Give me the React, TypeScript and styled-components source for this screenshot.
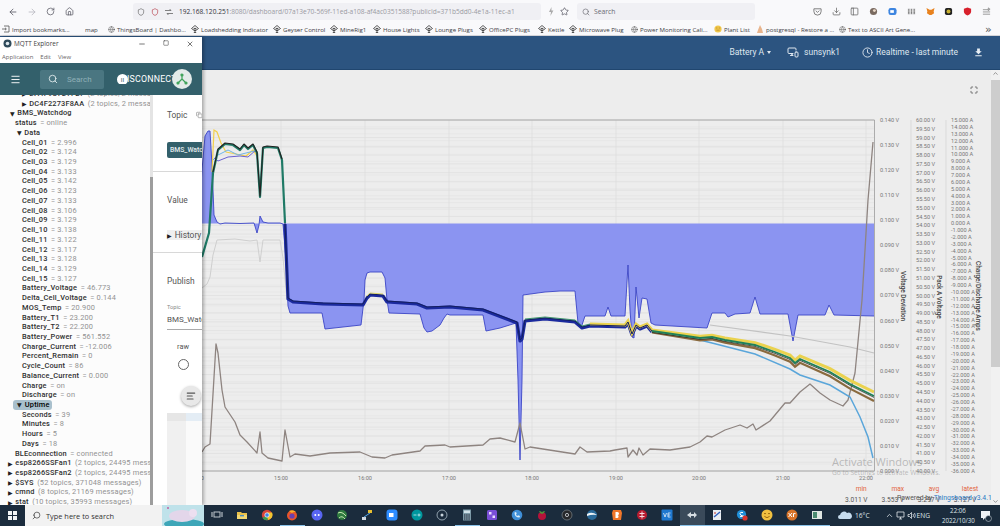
import * as React from "react";
import styled, { createGlobalStyle } from "styled-components";
import {
    AlignLeft,
    ArrowLeft,
    ArrowRight,
    ChevronDown,
    ChevronUp,
    Clock,
    Copy,
    Download,
    Globe,
    House,
    Maximize,
    Menu,
    Minus,
    MonitorSmartphone,
    PanelLeft,
    RotateCw,
    Search,
    Shield,
    Square,
    Star,
    X,
} from "lucide-react";

type Pt = [number, number];

const GlobalStyle = createGlobalStyle`
    html, body { margin: 0; padding: 0; background: #ededed; }
    * { box-sizing: border-box; }
`;

// chart data, read off the screenshot in page pixels
const blueLine: Pt[] = [
    [195, 223], [200, 200], [202, 170], [205, 136], [208, 131], [210, 131], [212, 165], [214, 215],
    [217, 222], [220, 224], [225, 223], [240, 223.5], [254, 223], [257, 233], [259, 225], [260, 216],
    [263, 222], [268, 223], [280, 223], [283, 224], [286, 260], [288, 306], [290, 313], [322, 313],
    [325, 329], [361, 325], [364, 300], [365, 280], [367, 273], [370, 272], [382, 272], [385, 278],
    [387, 300], [389, 313], [420, 314], [424, 328], [427, 332], [432, 331], [440, 325], [444, 318],
    [447, 314], [450, 315], [483, 315], [486, 331], [500, 328], [516, 323], [518, 380], [520, 460],
    [522, 380], [523, 295], [545, 292], [560, 291], [575, 291], [578, 323], [581, 328], [585, 316],
    [605, 316], [608, 307], [611, 316], [625, 316], [628, 265], [630, 310], [632, 337], [634, 338],
    [636, 287], [639, 318], [642, 298], [647, 299], [651, 323], [655, 325], [707, 328], [712, 313],
    [725, 313], [728, 317], [735, 314], [750, 313], [755, 297], [760, 314], [788, 314], [793, 341],
    [798, 315], [825, 315], [829, 305], [834, 315], [874, 316],
];

const bandLine: Pt[] = [
    [202, 257], [209, 233], [213, 173], [218, 150], [225, 144], [233, 145], [240, 150], [244, 145],
    [248, 149], [253, 145], [257, 153], [260, 197], [263, 148], [267, 147], [278, 148], [282, 160],
    [285, 223], [288, 298], [293, 301], [323, 303], [363, 304], [367, 297], [370, 294], [383, 295],
    [387, 301], [417, 303], [427, 307], [450, 306], [483, 309], [517, 322], [520, 340], [522, 338],
    [525, 320], [545, 318], [575, 321], [582, 327], [590, 325], [625, 326], [628, 322], [632, 334],
    [636, 325], [640, 328], [647, 325], [652, 331], [700, 338], [712, 337], [725, 340], [755, 345],
    [775, 352], [790, 358], [795, 363], [800, 359], [830, 372], [850, 384], [874, 396],
];

const lowCell: Pt[] = [
    [690, 337], [700, 340], [712, 343], [755, 354], [790, 369], [800, 375], [830, 385], [850, 397],
    [860, 417], [868, 437], [873, 458],
];

const greyLine: Pt[] = [
    [202, 288], [207, 284], [210, 277], [213, 255], [217, 240], [235, 239], [250, 241], [257, 240],
    [260, 262], [263, 240], [280, 240], [283, 258], [287, 300],
];
const greyTail: Pt[] = [[710, 325], [790, 336], [850, 347], [874, 353]];

const deviation: Pt[] = [
    [202, 452], [205, 447], [210, 444], [216, 344], [218, 353], [222, 390], [225, 407], [235, 422],
    [240, 435], [247, 442], [257, 453], [260, 432], [262, 453], [268, 458], [282, 461], [285, 430],
    [290, 457], [295, 454], [310, 456], [330, 453], [360, 452], [372, 457], [385, 458], [392, 455],
    [420, 451], [425, 446], [445, 445], [450, 447], [483, 445], [490, 439], [500, 438], [515, 442],
    [520, 423], [525, 449], [530, 447], [575, 454], [580, 447], [587, 452], [610, 451], [615, 450],
    [627, 448], [628, 457], [633, 450], [637, 455], [639, 448], [643, 455], [650, 449], [670, 450],
    [690, 447], [700, 442], [707, 436], [712, 437], [725, 430], [740, 425], [747, 428], [753, 424],
    [756, 430], [770, 421], [785, 403], [790, 403], [800, 392], [810, 384], [820, 393], [830, 400],
    [843, 406], [848, 400], [855, 373], [862, 300], [868, 200], [873, 142],
];

const yellowSpike: Pt[] = [[212, 172], [214, 130], [217, 132], [221, 143], [226, 152], [236, 154], [246, 156], [253, 150], [257, 156]];
const skyWobble: Pt[] = [[213, 160], [218, 155], [228, 150], [238, 155], [246, 153], [254, 151]];
const purpleWobble: Pt[] = [[214, 158], [218, 161], [228, 157], [240, 156], [248, 157], [256, 150]];

const toPath = (pts: Pt[]) => pts.map(([x, y], i) => `${i ? "L" : "M"}${x} ${y}`).join("");
const range = (pts: Pt[], from: number, to: number) => pts.filter(([x]) => x >= from && x <= to);
const shifted = (pts: Pt[], dy: (x: number) => number): Pt[] => pts.map(([x, y]) => [x, y + dy(x)]);
const spread = (x: number) => Math.max(0, (x - 650) / 224);

const hours: [number, string][] = [
    [197, "14:00"], [281, "15:00"], [365, "16:00"], [449, "17:00"], [532, "18:00"], [616, "19:00"],
    [699, "20:00"], [783, "21:00"], [866, "22:00"],
];
const deviationTicks = Array.from({ length: 15 }, (_, i) => `${(0.14 - i * 0.01).toFixed(3)} V`);
const voltTicks = Array.from({ length: 41 }, (_, i) => `${(60 - i * 0.5).toFixed(2)} V`);
const ampTicks = Array.from({ length: 52 }, (_, i) => `${(15 - i).toFixed(3)} A`);

const Page = styled.div`
    position: relative;
    width: 1000px;
    height: 526px;
    overflow: hidden;
    display: flex;
    flex-direction: column;
    background: #ededed;
    font-family: Roboto, "Liberation Sans", sans-serif;
`;

const BrowserBar = styled.div`
    height: 23px;
    background: #f9f9fb;
    display: flex;
    align-items: center;
    color: #5b5b66;
`;

const NavButton = styled.div<{ $faded?: boolean }>`
    width: 19px;
    display: flex;
    justify-content: center;
    color: ${(p) => (p.$faded ? "#b9b9c0" : "#5b5b66")};
`;

const NavButtons = styled.div`
    display: flex;
    padding-left: 3px;
    width: 133px;
`;

const UrlBox = styled.div`
    width: 408px;
    height: 17px;
    background: #f0f0f4;
    border-radius: 3px;
    display: flex;
    align-items: center;
    padding-left: 4px;
    gap: 6px;
    overflow: hidden;
    flex-shrink: 0;
`;

const UrlText = styled.div`
    font: 6.6px "Open Sans", sans-serif;
    color: #9a9aa2;
    white-space: nowrap;
    width: 353px;
    overflow: hidden;
    b {
        font-weight: 400;
        color: #33333a;
    }
`;

const BarSearch = styled.div`
    margin-left: 8px;
    width: 178px;
    height: 17px;
    background: #f0f0f4;
    border-radius: 3px;
    display: flex;
    align-items: center;
    gap: 4px;
    padding-left: 5px;
    font: 6.8px "Open Sans", sans-serif;
    color: #6b6b73;
`;

const ExtensionTray = styled.div`
    margin-left: 53px;
    display: flex;
    align-items: center;
`;

const ExtensionSlot = styled.div`
    width: 18.8px;
    display: flex;
    justify-content: center;
`;

const BookmarksBar = styled.div`
    height: 13px;
    background: #f9f9fb;
    border-bottom: 1px solid #d4d4d8;
    display: flex;
    align-items: center;
    position: relative;
    padding-left: 2px;
`;

const Bookmark = styled.div<{ $w: number }>`
    width: ${(p) => p.$w}px;
    flex-shrink: 0;
    display: flex;
    align-items: center;
    gap: 2px;
    font: 6.1px "Open Sans", sans-serif;
    color: #3c3c44;
    white-space: nowrap;
    overflow: hidden;
`;

const MoreBookmarks = styled.div`
    font: 11px/11px "DejaVu Sans", sans-serif;
    color: #555;
    margin-left: 3px;
`;

const DashHeader = styled.div`
    height: 34px;
    background: #2c5480;
    border-bottom: 1px solid #20466f;
    display: flex;
    justify-content: flex-end;
    align-items: center;
    color: #dfe7ef;
    font-size: 8.5px;
    padding-right: 16px;
    padding-bottom: 1px;
`;

const HeaderItem = styled.div<{ $gap?: number; $right: number }>`
    display: flex;
    align-items: center;
    gap: ${(p) => p.$gap ?? 3}px;
    margin-right: ${(p) => p.$right}px;
    white-space: nowrap;
`;

const Caret = styled.span`
    width: 0;
    height: 0;
    border-left: 2.5px solid transparent;
    border-right: 2.5px solid transparent;
    border-top: 3px solid #dfe7ef;
`;

const Body = styled.div`
    flex: 1;
    display: flex;
    min-height: 0;
`;

const Dashboard = styled.div`
    flex: 1;
    display: flex;
    flex-direction: column;
    position: relative;
    min-width: 0;
`;

const FullscreenRow = styled.div`
    height: 40px;
    display: flex;
    justify-content: flex-end;
    padding: 16px 13px 0 0;
    color: #444;
`;

const ChartSvg = styled.svg`
    display: block;
    flex-shrink: 0;
    font-family: Roboto, sans-serif;
`;

const Legend = styled.div`
    position: relative;
    flex: 1;
    padding: 2px 0 0 843px;
    font-size: 6.6px;
    line-height: 10.5px;
`;

const LegendRow = styled.div<{ $shift?: number }>`
    display: grid;
    grid-template-columns: 36.5px 36.5px 36px 36px;
    text-align: center;
    margin-left: ${(p) => p.$shift ?? 0}px;
`;

const LegendHead = styled.span`
    color: #e2623b;
`;

const LegendValue = styled.span`
    color: #555;
    white-space: nowrap;
`;

const Powered = styled.div`
    position: absolute;
    left: 897px;
    top: 11px;
    font-size: 6.8px;
    line-height: 10px;
    color: #555;
    white-space: nowrap;
    span {
        color: #2a7ac4;
    }
`;

const ScrollTrack = styled.div`
    width: 9px;
    background: #f1f1f1;
    display: flex;
    flex-direction: column;
    align-items: center;
    justify-content: space-between;
    position: relative;
`;

const ScrollThumb = styled.div`
    position: absolute;
    top: 10px;
    left: 0;
    width: 100%;
    height: 287px;
    background: #cdcdcd;
`;

const Watermark = styled.div`
    position: absolute;
    left: 832px;
    top: 385px;
    pointer-events: none;
    color: rgba(140, 140, 140, 0.55);
    font-family: "Open Sans", sans-serif;
    white-space: nowrap;
`;

const WatermarkTitle = styled.div`
    font-size: 11px;
    line-height: 14px;
`;

const WatermarkHint = styled.div`
    font-size: 6.6px;
    line-height: 8px;
`;

const Taskbar = styled.div`
    height: 21px;
    background: #1b2c3d;
    display: flex;
    align-items: stretch;
    position: relative;
    z-index: 3;
    color: #dfe5ea;
`;

const StartButton = styled.div`
    width: 25px;
    display: flex;
    align-items: center;
    justify-content: center;
`;

const TaskSearch = styled.div`
    width: 179px;
    background: #f2f2f2;
    display: flex;
    align-items: center;
    gap: 5px;
    padding-left: 7px;
    font: 7.4px "Open Sans", sans-serif;
    color: #333;
    position: relative;
    overflow: hidden;
`;

const SearchArt = styled.svg`
    position: absolute;
    right: 0;
    top: 0;
`;

const TaskApps = styled.div`
    display: flex;
    padding-left: 0.5px;
`;

const TaskSlot = styled.div<{ $active?: boolean; $open?: boolean }>`
    width: 25px;
    display: flex;
    align-items: center;
    justify-content: center;
    background: ${(p) => (p.$active ? "#3a4a5a" : "transparent")};
    border-bottom: 1px solid ${(p) => (p.$open || p.$active ? "#8cc4ea" : "transparent")};
`;

const Tray = styled.div`
    margin-left: auto;
    display: flex;
    align-items: center;
    font: 6.6px "Open Sans", sans-serif;
    padding-right: 8px;
`;

const TrayItem = styled.div<{ $left?: number }>`
    margin-left: ${(p) => p.$left ?? 0}px;
    display: flex;
    align-items: center;
    white-space: nowrap;
`;

const TrayClock = styled.div`
    margin-left: 12px;
    text-align: center;
    line-height: 9.5px;
    font-size: 6.2px;
    width: 32px;
`;

const MqttWindow = styled.div`
    position: absolute;
    left: 0;
    top: 37px;
    width: 202px;
    height: 468px;
    background: #fff;
    box-shadow: 2px 0 3px rgba(0, 0, 0, 0.28);
    display: flex;
    flex-direction: column;
    z-index: 2;
`;

const TitleBar = styled.div`
    height: 13px;
    padding-left: 3px;
    display: flex;
    align-items: center;
    gap: 2px;
    font: 6.4px "Open Sans", sans-serif;
    color: #444;
    flex-shrink: 0;
`;

const WindowControls = styled.div`
    margin-left: auto;
    display: flex;
    color: #333;
`;

const WindowControl = styled.div`
    width: 24px;
    display: flex;
    justify-content: center;
`;

const MenuBar = styled.div`
    height: 13px;
    padding-left: 2px;
    display: flex;
    align-items: center;
    gap: 7px;
    font: 6px "Open Sans", sans-serif;
    color: #666;
    flex-shrink: 0;
`;

const TealBar = styled.div`
    height: 32px;
    background: #33606b;
    display: flex;
    align-items: center;
    padding-left: 10px;
    color: #fff;
    flex-shrink: 0;
    position: relative;
    z-index: 1;
`;

const SearchField = styled.div`
    margin-left: 19px;
    width: 64px;
    height: 19px;
    background: #4a7681;
    border-radius: 2px;
    display: flex;
    align-items: center;
    gap: 9px;
    padding-left: 8px;
    font-size: 8px;
    color: #8fb0b8;
`;

const Disconnect = styled.div`
    margin-left: 13px;
    font-size: 8.8px;
    font-weight: 400;
    letter-spacing: 0.2px;
    position: relative;
    width: 60px;
    padding-left: 10px;
    white-space: nowrap;
    overflow: hidden;
`;

const DisconnectDot = styled.span`
    position: absolute;
    left: 0;
    top: 0;
    width: 11px;
    height: 11px;
    border-radius: 50%;
    background: #fff;
    color: #33606b;
    font-size: 6px;
    line-height: 11px;
    text-align: center;
`;

const Avatar = styled.div`
    position: absolute;
    left: 172px;
    top: 6px;
    width: 20px;
    height: 20px;
    border-radius: 50%;
    background: #e3ebe9;
    display: flex;
    align-items: center;
    justify-content: center;
`;

const Panes = styled.div`
    flex: 1;
    display: flex;
    min-height: 0;
`;

const TreePane = styled.div`
    width: 150px;
    background: #fcfcfc;
    overflow: hidden;
    flex-shrink: 0;
`;

const TreeList = styled.div`
    margin-top: -6px;
`;

const TreeRow = styled.div<{ $indent: number }>`
    height: 9.72px;
    line-height: 9.72px;
    padding-left: ${(p) => p.$indent}px;
    font-size: 7.4px;
    letter-spacing: 0.18px;
    white-space: nowrap;
    display: flex;
    align-items: center;
    gap: 2.5px;
`;

const Glyph = styled.span`
    font: 6px "DejaVu Sans", sans-serif;
    color: #222;
`;

const Key = styled.span`
    font-weight: 500;
    color: #2f2f2f;
`;

const Val = styled.span`
    color: #929292;
    font-weight: 400;
    margin-left: 1px;
`;

const Highlight = styled.span`
    display: inline-flex;
    align-items: center;
    gap: 3px;
    background: #a9c0cd;
    border-radius: 3px;
    padding: 0 2px 0 4px;
    margin-left: -3px;
    font-weight: 500;
`;

const SplitBar = styled.div`
    width: 3px;
    flex-shrink: 0;
    background: linear-gradient(#e4e4e4 0, #e4e4e4 82px, #9d9d9d 82px);
`;

const DetailPane = styled.div`
    flex: 1;
    min-width: 0;
    overflow: hidden;
    display: flex;
    flex-direction: column;
    background: #fff;
    color: #555;
    font-size: 8.4px;
`;

const DetailSection = styled.div<{ $h: number; $last?: boolean }>`
    height: ${(p) => p.$h}px;
    flex-shrink: 0;
    padding-left: 14px;
    border-bottom: ${(p) => (p.$last ? "none" : "1px solid #d8d8d8")};
    white-space: nowrap;
    overflow: hidden;
`;

const DetailLabel = styled.div<{ $top: number }>`
    padding-top: ${(p) => p.$top}px;
    display: flex;
    align-items: center;
    gap: 8px;
    line-height: 10px;
`;

const TopicChip = styled.div`
    margin-top: 22px;
    height: 16px;
    width: 50px;
    border-radius: 2px;
    background: #33606b;
    color: #e4ecee;
    font-size: 6.8px;
    font-weight: 500;
    line-height: 16px;
    padding-left: 3px;
`;

const HistoryRow = styled.div`
    margin-top: 25px;
    height: 10px;
    background: #f0f0f0;
    line-height: 10px;
    display: flex;
    align-items: center;
    gap: 3px;
`;

const SmallLabel = styled.div`
    margin-top: 18px;
    font-size: 5.6px;
    color: #888;
    line-height: 7px;
`;

const TopicInput = styled.div`
    margin-top: 4px;
    height: 15px;
    width: 40px;
    border-bottom: 1px solid #aaa;
    font-size: 8px;
    line-height: 10px;
`;

const RawOption = styled.div`
    width: 32px;
    padding-top: 12px;
    font-size: 7.4px;
    text-align: center;
    line-height: 9px;
    display: flex;
    flex-direction: column;
    align-items: center;
    gap: 8px;
`;

const RadioDot = styled.div`
    width: 11px;
    height: 11px;
    border-radius: 50%;
    border: 1px solid #666;
`;

const FabRow = styled.div`
    position: relative;
    height: 42px;
    flex-shrink: 0;
`;

const Fab = styled.div`
    position: absolute;
    left: 28px;
    top: 15px;
    width: 20px;
    height: 20px;
    border-radius: 50%;
    background: #e8e8e8;
    box-shadow: 0 1px 3px rgba(0, 0, 0, 0.35);
    display: flex;
    align-items: center;
    justify-content: center;
    color: #555;
`;

const EditorBlock = styled.div`
    flex: 1;
    margin-left: 14px;
    display: flex;
`;

const EditorGutter = styled.div`
    width: 19px;
    background: #f0f0f0;
    border-top: 8px solid #e6e6e6;
`;

const EditorLine = styled.div`
    flex: 1;
    background: #fafafa;
    border-top: 8px solid #e4edf5;
`;

const Tree: [number, string, string?][] = [
    [22, "DA4F9C7D7F27", "(2 topics, 2 messages)"],
    [22, "DC4F2273F8AA", "(2 topics, 2 messages)"],
];

const cells = [
    "2.996", "3.124", "3.129", "3.133", "3.142", "3.123", "3.133", "3.106", "3.129", "3.138", "3.122", "3.117", "3.128",
    "3.129", "3.127",
];

const dataRows: [string, string][] = [
    ...cells.map((v, i): [string, string] => [`Cell_${String(i + 1).padStart(2, "0")}`, v]),
    ["Battery_Voltage", "46.773"],
    ["Delta_Cell_Voltage", "0.144"],
    ["MOS_Temp", "20.900"],
    ["Battery_T1", "23.200"],
    ["Battery_T2", "22.200"],
    ["Battery_Power", "561.552"],
    ["Charge_Current", "-12.006"],
    ["Percent_Remain", "0"],
    ["Cycle_Count", "86"],
    ["Balance_Current", "0.000"],
    ["Charge", "on"],
    ["Discharge", "on"],
];

const uptimeRows: [string, string][] = [
    ["Seconds", "39"],
    ["Minutes", "8"],
    ["Hours", "5"],
    ["Days", "18"],
];

const rootRows: [string, string][] = [
    ["esp8266SSFan1", "(2 topics, 24495 messages)"],
    ["esp8266SSFan2", "(2 topics, 24495 messages)"],
    ["$SYS", "(52 topics, 371048 messages)"],
    ["cmnd", "(8 topics, 21169 messages)"],
    ["stat", "(10 topics, 35993 messages)"],
];

const bookmarks: [number, string, string][] = [
    [83, "import", "Import bookmarks..."],
    [23, "none", "map"],
    [83, "globe", "ThingsBoard | Dashbo..."],
    [82, "tb", "Loadshedding Indicator"],
    [57, "tb", "Geyser Control"],
    [43, "tb", "MineRig1"],
    [52, "tb", "House Lights"],
    [54, "tb", "Lounge Plugs"],
    [59, "tb", "OfficePC Plugs"],
    [31, "tb", "Kettle"],
    [62, "tb", "Microwave Plug"],
    [83, "globe", "Power Monitoring Cali..."],
    [42, "smile", "Plant List"],
    [83, "pg", "postgresql - Restore a ..."],
    [143, "globe", "Text to ASCII Art Gene..."],
];

const BookmarkIcon: React.FC<{ kind: string }> = ({ kind }) => {
    if (kind === "none") return null;
    if (kind === "globe") return <Globe size={7} color="#555" strokeWidth={1.6} />;
    if (kind === "import")
        return (
            <svg width="8" height="8" viewBox="0 0 8 8" fill="none" stroke="#555" strokeWidth=".8">
                <path d="M2 1h5v6H2M0 4h4M3 2.8 4.4 4 3 5.2" />
            </svg>
        );
    if (kind === "smile")
        return (
            <svg width="8" height="8" viewBox="0 0 8 8">
                <circle cx="4" cy="4" r="3.6" fill="#f0c64a" />
                <path d="M2 3h1.4M4.8 3h1.4M2.4 5.2h3.2" stroke="#a87a20" strokeWidth=".6" />
            </svg>
        );
    if (kind === "pg")
        return (
            <svg width="8" height="8" viewBox="0 0 8 8">
                <path d="M4 0 6 4l1 4H1l1-3z" fill="#e8b48c" />
            </svg>
        );
    return (
        <svg width="8" height="8" viewBox="0 0 8 8" fill="none" stroke="#333" strokeWidth=".8">
            <path d="M4 .5 7.5 3.5 6 4.6 4 3 2 4.6.5 3.5zM4 3v4.5M2.5 5.5h3M2.8 7.5h2.4" />
        </svg>
    );
};

const ext = (body: React.ReactNode) => (
    <svg width="9" height="9" viewBox="0 0 10 10">
        {body}
    </svg>
);

const extensions = [
    ext(<path d="M1 2h8v3a4 4 0 0 1-8 0zM3 4l2 2 2-2" fill="none" stroke="#666" strokeWidth=".9" />),
    <Download key="d" size={9} color="#666" />,
    <PanelLeft key="p" size={9} color="#666" />,
    ext(<><circle cx="5" cy="5" r="4" fill="#7a6a60" /><circle cx="6" cy="4" r="1.6" fill="#e8d8c8" /></>),
    ext(<><rect x=".5" y="1" width="9" height="8" rx="2.5" fill="#3d85e0" /><rect x="2.5" y="3.5" width="4" height="3" fill="#fff" /></>),
    ext(<path d="M1 2h2v6H1zM4 2h2v6H4zM7 2h2v6H7zM1 4.5h8" fill="#777" stroke="#f9f9fb" strokeWidth=".4" />),
    ext(<path d="M.5 1 4 3h2l3.5-2-1 4 .5 2-3 2H4L1 7l.5-2z" fill="#e8821e" />),
    ext(<><rect x="1" y="1" width="8" height="8" rx="2" fill="#222" /><circle cx="5" cy="5" r="2.2" fill="#c8b030" /></>),
    ext(<path d="M1 2 5 .5 9 2v3q0 3-4 4.5Q1 8 1 5z" fill="#d8202c" />),
    ext(<path d="M1 3h6M1 5.5h8M1 8h8M7 1v3l2-1.5z" stroke="#777" strokeWidth=".8" fill="none" />),
];

const icon = (body: React.ReactNode) => (
    <svg width="12" height="12" viewBox="0 0 12 12">
        {body}
    </svg>
);

const taskApps: { node: React.ReactNode; open?: boolean; active?: boolean }[] = [
    { node: icon(<><rect x="3" y="3" width="6" height="5" fill="none" stroke="#cfd6dc" strokeWidth=".9" /><path d="M1 3v5M11 3v5" stroke="#cfd6dc" /></>) },
    { node: icon(<><path d="M1 3h4l1 1h5v6H1z" fill="#e8c04a" /><path d="M1 6h10v4H1z" fill="#f4d870" /><path d="M4 6h4v1.4H4z" fill="#4a90c8" /></>) },
    { node: icon(<><circle cx="6" cy="6" r="5.2" fill="#d8443a" /><path d="M6 6 1.5 9A5.2 5.2 0 0 0 7 11z" fill="#3c9a50" /><path d="M6 6 7 11a5.2 5.2 0 0 0 4-7.5H6z" fill="#f2c530" /><circle cx="6" cy="6" r="2.2" fill="#3f84e8" stroke="#fff" strokeWidth=".7" /></>) },
    { node: icon(<><circle cx="6" cy="6.5" r="5" fill="#e8552a" /><circle cx="6" cy="7" r="2.6" fill="#6a3fb0" /><path d="M3 2Q7 0 10 3 7 2.5 6 4 4 3 3 2z" fill="#f8b030" /></>), open: true },
    { node: icon(<><circle cx="6" cy="6" r="5.5" fill="#5865f2" /><circle cx="4.3" cy="6" r="1" fill="#fff" /><circle cx="7.7" cy="6" r="1" fill="#fff" /></>) },
    { node: icon(<><circle cx="6" cy="6" r="5" fill="#2f7a40" /><path d="M2 4q4-2 8 3M3 9q3-3 6 1" stroke="#c8e8b0" fill="none" /></>) },
    { node: icon(<><rect x="1" y="8" width="4" height="3" fill="#d0d8e0" /><rect x="7" y="1" width="4" height="3" fill="#e8c030" /><path d="M3 8 9 4" stroke="#58a8e8" /></>) },
    { node: icon(<><rect x=".5" y=".5" width="11" height="11" rx="3" fill="#2d8cff" /><rect x="3" y="4" width="4.5" height="4" fill="#fff" /></>) },
    { node: icon(<><circle cx="6" cy="6" r="5.5" fill="#00979d" /><path d="M2.5 6h3M6.5 6h3M8 4.5v3" stroke="#cdeff0" strokeWidth=".8" /></>) },
    { node: icon(<><circle cx="6" cy="6" r="5" fill="none" stroke="#8fa0ac" /><circle cx="6" cy="6" r="1.5" fill="#c8d4dc" /></>) },
    { node: icon(<><rect x="2" y=".5" width="8" height="11" fill="#7d9aa8" /><rect x="3" y="1.5" width="6" height="2.5" fill="#d0e0e8" /><path d="M3 6h6M3 8h6M3 10h6" stroke="#223" strokeDasharray="1.4 .8" /></>), open: true },
    { node: icon(<><rect x="1" y="1" width="10" height="10" rx="1.5" fill="#7a4fd8" /><path d="M3 3h2.5v2.5H3zM6.5 6.5H9V9H6.5z" fill="#eadcff" /></>) },
    { node: icon(<><circle cx="6" cy="6" r="5.3" fill="#3f8fd8" /><path d="M3.5 3.5q0 5 5 5l.5-1.6-2-.6-.6.8q-1-.5-1.5-1.7l.8-.5-.6-2z" fill="#dff0fb" /></>) },
    { node: icon(<><circle cx="6" cy="7" r="4" fill="#b5133a" /><path d="M3 2q3 0 3 2 0-2 3-2-1 3-3 3T3 2z" fill="#4a9a3a" /></>) },
    { node: icon(<><circle cx="6" cy="6" r="5" fill="#26282b" stroke="#7d8488" strokeWidth=".7" /><circle cx="6" cy="6" r="1.6" fill="none" stroke="#d8dcdf" strokeWidth=".8" /></>) },
    { node: icon(<><circle cx="6" cy="6" r="5" fill="#2a6a9a" /><path d="M1 5q5-3 10 1-5-1-10 1z" fill="#eef3f6" /></>) },
    { node: icon(<><path d="M2 1h8l1 3-1 7H2L1 4z" fill="#f0762a" /><path d="M4.5 3v6h2a1.6 1.6 0 0 0 0-3 1.4 1.4 0 0 0 0-3z" fill="#fff" /></>) },
    { node: icon(<><circle cx="6" cy="6" r="5" fill="#b81c30" /><path d="M6 2.5v7M3.5 4.5h5M3.5 7.5h5" stroke="#f6d8dc" /></>) },
    { node: icon(<><rect x=".5" y=".5" width="11" height="11" rx="1" fill="#1f78d0" /><path d="M2.5 4 4 8l1.5-4M9.5 4H7v4h2.5M7 6h2" stroke="#fff" strokeWidth=".7" fill="none" /></>) },
    { node: icon(<path d="M1 6 5 3v2h3V3l3 3-3 3V7H5v2z" fill="#d6dde2" />), active: true },
    { node: icon(<><rect x="2" y="1" width="8" height="10" fill="#e8edf2" /><path d="M3 8 9 3" stroke="#3060c0" strokeWidth="1.4" /><path d="M3 4h2" stroke="#c03030" /></>), open: true },
    { node: icon(<><circle cx="5.5" cy="5.5" r="4.6" fill="#1f8fd8" /><path d="M7 3.6Q4 2.6 4 4.6t3 2.4-3 .6" stroke="#fff" fill="none" /><circle cx="9" cy="9" r="2.6" fill="#d8342c" /></>), open: true },
    { node: icon(<><circle cx="6" cy="6" r="5.5" fill="#f0c040" /><path d="M3 4.6h2M7 4.6h2M3.4 7.4Q6 10 8.6 7.4" stroke="#9a6a10" fill="none" /></>), open: true },
    { node: icon(<><circle cx="6" cy="6" r="5.5" fill="#d8742a" /><path d="M2.5 4 6 8M6 4 2.5 8M7.5 8V4.6h2" stroke="#fff" fill="none" /></>), open: true },
    { node: icon(<><rect x="1" y="2" width="10" height="8" fill="#dfe6e2" /><rect x="2" y="3" width="4" height="6" fill="#4a8a70" /></>), open: true },
];

const Arrow: React.FC<{ open?: boolean }> = ({ open }) => <Glyph>{open ? "▼" : "▶"}</Glyph>;

const ChartPlot: React.FC = () => {
    const band = range(bandLine, 283, 874);
    const early = range(bandLine, 202, 286);
    return (
        <ChartSvg width="991" height="372" viewBox="0 110 991 372">
            {voltTicks.map((_, i) => (
                <line key={`v${i}`} x1="150" x2="874" y1={120 + i * 8.775} y2={120 + i * 8.775} stroke="#dcdcdc" strokeWidth=".6" />
            ))}
            {ampTicks.map((_, i) => (
                <line key={`a${i}`} x1="150" x2="874" y1={120 + i * 6.88} y2={120 + i * 6.88} stroke="#e2e2e2" strokeWidth=".5" />
            ))}
            {hours.map(([x]) => (
                <line key={x} x1={x} x2={x} y1="120" y2="471" stroke="#dddddd" strokeWidth=".7" />
            ))}

            <path d={`${toPath(blueLine)}L874 223.5L195 223.5Z`} fill="#8b94f1" />
            <path d={toPath(blueLine)} fill="none" stroke="#3b45c6" strokeWidth=".9" strokeLinejoin="round" />

            <path d={toPath(greyLine)} fill="none" stroke="#cfcfcf" strokeWidth="1" />
            <path d={toPath(greyTail)} fill="none" stroke="#c2c2c2" strokeWidth="1.2" />
            <path d={toPath(deviation)} fill="none" stroke="#8e8480" strokeWidth="1.3" strokeLinejoin="round" />

            <path d={toPath(yellowSpike)} fill="none" stroke="#f2cf4c" strokeWidth="1.2" />
            <path d={toPath(skyWobble)} fill="none" stroke="#6fb6e6" strokeWidth="1" />
            <path d={toPath(purpleWobble)} fill="none" stroke="#6a60d0" strokeWidth="1" />
            <path d={toPath(early)} fill="none" stroke="#1f7a66" strokeWidth="2.2" strokeLinejoin="round" />
            <path d={toPath(shifted(range(early, 213, 283), () => -1))} fill="none" stroke="#222" strokeWidth="1.1" strokeLinejoin="round" />

            <path d={toPath(lowCell)} fill="none" stroke="#5aa6da" strokeWidth="1.5" />

            <path d={toPath(shifted(range(band, 283, 660), () => 1))} fill="none" stroke="#1b2a9e" strokeWidth="3.2" strokeLinejoin="round" />
            <path d={toPath(shifted(range(band, 650, 874), (x) => 1.5 + spread(x) * 3.5))} fill="none" stroke="#8a6a3e" strokeWidth="2.2" />
            <path d={toPath(shifted(range(band, 583, 874), (x) => -1 - spread(x) * 3))} fill="none" stroke="#ead24e" strokeWidth={3} />
            <path d={toPath(range(band, 283, 660))} fill="none" stroke="#15205f" strokeWidth="1" strokeLinejoin="round" />
            <path d={toPath(shifted(range(band, 650, 874), () => 1.4))} fill="none" stroke="#2a2a26" strokeWidth=".8" />
            <path d={toPath(shifted(range(band, 650, 874), () => 0))} fill="none" stroke="#1f8058" strokeWidth="1.8" />
            <path d={toPath(shifted(range(band, 525, 600), () => -1))} fill="none" stroke="#2b8a5c" strokeWidth=".9" />
            <path d={toPath(shifted(range(band, 367, 385), () => -1))} fill="none" stroke="#d8d05a" strokeWidth=".9" />

            <path d="M150 120H874.5V471H150" fill="none" stroke="#9a9a9a" strokeWidth=".8" />
            <line x1="911" x2="911" y1="120" y2="471" stroke="#d2d2d2" strokeWidth=".7" />
            <line x1="946" x2="946" y1="120" y2="471" stroke="#d2d2d2" strokeWidth=".7" />

            <g fontSize="5.6" fill="#777">
                {hours.map(([x, t]) => (
                    <text key={t} x={x} y="480" textAnchor="middle">
                        {t}
                    </text>
                ))}
                {deviationTicks.map((t, i) => (
                    <text key={t} x="880" y={122 + i * 25.07}>
                        {t}
                    </text>
                ))}
                {voltTicks.map((t, i) => (
                    <text key={t} x="916" y={122 + i * 8.775}>
                        {t}
                    </text>
                ))}
                {ampTicks.map((t, i) => (
                    <text key={t} x="951" y={122 + i * 6.88}>
                        {t}
                    </text>
                ))}
            </g>
            <g fontSize="6.4" fontWeight="500" fill="#444" textAnchor="middle">
                <text transform="translate(900.5 296) rotate(90)">Voltage Deviation</text>
                <text transform="translate(936.5 297) rotate(90)">Pack A Voltage</text>
                <text transform="translate(975.5 296) rotate(90)">Charge/Discharge Amps</text>
            </g>
        </ChartSvg>
    );
};

const App: React.FC = () => (
    <Page>
        <GlobalStyle />
        <BrowserBar>
            <NavButtons>
                <NavButton><ArrowLeft size={10} /></NavButton>
                <NavButton $faded><ArrowRight size={10} /></NavButton>
                <NavButton><RotateCw size={9} /></NavButton>
                <NavButton><House size={9} /></NavButton>
            </NavButtons>
            <UrlBox>
                <Shield size={8} color="#666" />
                <Shield size={8} color="#b8404c" />
                <svg width="8" height="8" viewBox="0 0 8 8" stroke="#666" strokeWidth=".8" fill="none">
                    <path d="M0 2.5h6L4.6 1M8 5.5H2l1.4 1.5" />
                </svg>
                <UrlText>
                    <b>192.168.120.251</b>:8080/dashboard/07a13e70-569f-11ed-a108-af4ac0351588?publicId=371b5dd0-4e1a-11ec-a1
                </UrlText>
            </UrlBox>
            <NavButton>
                <svg width="6" height="9" viewBox="0 0 6 9">
                    <path d="M3.5 0 1 5h2L2.4 9 5.4 3.5H3.4z" fill="#aaa" />
                </svg>
            </NavButton>
            <Star size={9} />
            <BarSearch>
                <Search size={8} />
                Search
            </BarSearch>
            <ExtensionTray>
                {extensions.map((e, i) => (
                    <ExtensionSlot key={i}>{e}</ExtensionSlot>
                ))}
            </ExtensionTray>
        </BrowserBar>
        <BookmarksBar>
            {bookmarks.map(([w, kind, label], i) => (
                <Bookmark key={i} $w={w}>
                    <BookmarkIcon kind={kind} />
                    {label}
                </Bookmark>
            ))}
            <MoreBookmarks>»</MoreBookmarks>
        </BookmarksBar>
        <DashHeader>
            <HeaderItem $right={16}>
                Battery A <Caret />
            </HeaderItem>
            <HeaderItem $gap={5} $right={22}>
                <MonitorSmartphone size={12} />
                sunsynk1
            </HeaderItem>
            <HeaderItem $right={15} $gap={3}>
                <Clock size={11} />
                Realtime - last minute
            </HeaderItem>
            <svg width="11" height="11" viewBox="0 0 24 24" fill="#e8eef4">
                <path d="M19 9h-4V3H9v6H5l7 7 7-7zM5 18v2h14v-2H5z" />
            </svg>
        </DashHeader>
        <Body>
            <Dashboard>
                <FullscreenRow>
                    <Maximize size={8} strokeWidth={2.2} />
                </FullscreenRow>
                <ChartPlot />
                <Legend>
                    <LegendRow>
                        <LegendHead>min</LegendHead>
                        <LegendHead>max</LegendHead>
                        <LegendHead>avg</LegendHead>
                        <LegendHead>latest</LegendHead>
                    </LegendRow>
                    <LegendRow $shift={-5}>
                        <LegendValue>3.011 V</LegendValue>
                        <LegendValue>3.553 V</LegendValue>
                        <LegendValue>3.297 V</LegendValue>
                        <LegendValue>3.127 V</LegendValue>
                    </LegendRow>
                    <Powered>
                        Powered by <span>Thingsboard v3.4.1</span>
                    </Powered>
                </Legend>
                <Watermark>
                    <WatermarkTitle>Activate Windows</WatermarkTitle>
                    <WatermarkHint>Go to Settings to activate Windows.</WatermarkHint>
                </Watermark>
            </Dashboard>
            <ScrollTrack>
                <ScrollThumb />
                <ChevronUp size={7} color="#555" />
                <ChevronDown size={7} color="#555" />
            </ScrollTrack>
        </Body>
        <Taskbar>
            <StartButton>
                <svg width="9" height="9" viewBox="0 0 9 9" fill="#f2f5f7">
                    <path d="M0 0h4v4H0zM5 0h4v4H5zM0 5h4v4H0zM5 5h4v4H5z" />
                </svg>
            </StartButton>
            <TaskSearch>
                <Search size={9} color="#444" style={{ transform: "scaleX(-1)" }} />
                Type here to search
                <SearchArt width="42" height="21" viewBox="0 0 42 21">
                    <rect width="42" height="21" fill="#bfe2ea" />
                    <ellipse cx="22" cy="19" rx="20" ry="5" fill="#3ea6b8" />
                    <ellipse cx="20" cy="11" rx="13" ry="6" fill="#e3d6ea" />
                    <circle cx="31" cy="8" r="4" fill="#ecdff0" />
                    <circle cx="6" cy="3" r="1" fill="#c060a0" />
                </SearchArt>
            </TaskSearch>
            <TaskApps>
                {taskApps.map((a, i) => (
                    <TaskSlot key={i} $open={a.open} $active={a.active}>
                        {a.node}
                    </TaskSlot>
                ))}
            </TaskApps>
            <Tray>
                <svg width="15" height="9" viewBox="0 0 15 9">
                    <path d="M2 8a2 2 0 0 1 0-4 4 4 0 0 1 7-2 3 3 0 0 1 3 6z" fill="#c6dcee" />
                </svg>
                <TrayItem $left={2}>16°C</TrayItem>
                <TrayItem $left={15}><ChevronUp size={9} /></TrayItem>
                <TrayItem $left={2}>
                    <svg width="9" height="9" viewBox="0 0 9 9" fill="none" stroke="#dfe5ea" strokeWidth=".8">
                        <path d="M1 1h7v5H1zM3 8h3M4.500 6v2" />
                    </svg>
                </TrayItem>
                <TrayItem $left={2}>
                    <svg width="9" height="9" viewBox="0 0 9 9" fill="none" stroke="#dfe5ea" strokeWidth=".8">
                        <path d="M1 3.500h1.500L4.500 1.500v6L2.500 5.500H1zM6 3q1 1.500 0 3M7.500 2q1.500 2.500 0 5" />
                    </svg>
                </TrayItem>
                <TrayItem $left={1}>ENG</TrayItem>
                <TrayClock>
                    22:06
                    <br />
                    2022/10/30
                </TrayClock>
                <TrayItem $left={6}>
                    <svg width="12" height="12" viewBox="0 0 12 12">
                        <path d="M1 1h9v7H5L3 10V8H1z" fill="#eef2f5" />
                        <circle cx="8.5" cy="8.500" r="3" fill="#1b2c3d" stroke="#dfe5ea" strokeWidth=".5" />
                    </svg>
                </TrayItem>
            </Tray>
        </Taskbar>

        <MqttWindow>
            <TitleBar>
                <svg width="9" height="9" viewBox="0 0 9 9">
                    <circle cx="4.500" cy="4.500" r="4" fill="#2f4a5a" />
                    <circle cx="4.500" cy="4.500" r="1.800" fill="#dfe8ee" />
                </svg>
                MQTT Explorer
                <WindowControls>
                    <WindowControl><Minus size={8} /></WindowControl>
                    <WindowControl><Square size={6} /></WindowControl>
                    <WindowControl><X size={8} /></WindowControl>
                </WindowControls>
            </TitleBar>
            <MenuBar>
                <span>Application</span>
                <span>Edit</span>
                <span>View</span>
            </MenuBar>
            <TealBar>
                <Menu size={11} />
                <SearchField>
                    <Search size={10} color="#e8f0f2" />
                    Search
                </SearchField>
                <Disconnect>
                    <DisconnectDot>II</DisconnectDot>
                    ISCONNECT
                </Disconnect>
                <Avatar>
                    <svg width="12" height="12" viewBox="0 0 12 12" stroke="#3fa35a" strokeWidth="1.200" fill="#3fa35a">
                        <path d="M6 6V2M6 6 2 10M6 6l4 4" fill="none" />
                        <circle cx="6" cy="2" r="1" />
                        <circle cx="2" cy="10" r="1" />
                        <circle cx="10" cy="10" r="1" />
                    </svg>
                </Avatar>
            </TealBar>
            <Panes>
                <TreePane>
                    <TreeList>
                        {Tree.map(([indent, k, v]) => (
                            <TreeRow key={k} $indent={indent}>
                                <Arrow />
                                <Key>{k}</Key>
                                <Val>{v}</Val>
                            </TreeRow>
                        ))}
                        <TreeRow $indent={10}>
                            <Arrow open />
                            <Key>BMS_Watchdog</Key>
                        </TreeRow>
                        <TreeRow $indent={15}>
                            <Key>status</Key>
                            <Val>= online</Val>
                        </TreeRow>
                        <TreeRow $indent={17}>
                            <Arrow open />
                            <Key>Data</Key>
                        </TreeRow>
                        {dataRows.map(([k, v]) => (
                            <TreeRow key={k} $indent={22}>
                                <Key>{k}</Key>
                                <Val>= {v}</Val>
                            </TreeRow>
                        ))}
                        <TreeRow $indent={16}>
                            <Highlight>
                                <Arrow open />
                                Uptime
                            </Highlight>
                        </TreeRow>
                        {uptimeRows.map(([k, v]) => (
                            <TreeRow key={k} $indent={22}>
                                <Key>{k}</Key>
                                <Val>= {v}</Val>
                            </TreeRow>
                        ))}
                        <TreeRow $indent={15}>
                            <Key>BLEconnection</Key>
                            <Val>= connected</Val>
                        </TreeRow>
                        {rootRows.map(([k, v]) => (
                            <TreeRow key={k} $indent={8}>
                                <Arrow />
                                <Key>{k}</Key>
                                <Val>{v}</Val>
                            </TreeRow>
                        ))}
                    </TreeList>
                </TreePane>
                <SplitBar />
                <DetailPane>
                    <DetailSection $h={77}>
                        <DetailLabel $top={15}>
                            Topic
                            <Copy size={8} color="#777" />
                        </DetailLabel>
                        <TopicChip>BMS_Watchdog</TopicChip>
                    </DetailSection>
                    <DetailSection $h={81}>
                        <DetailLabel $top={23}>Value</DetailLabel>
                        <HistoryRow>
                            <Glyph>▶</Glyph>
                            History
                        </HistoryRow>
                    </DetailSection>
                    <DetailSection $h={118} $last>
                        <DetailLabel $top={23}>Publish</DetailLabel>
                        <SmallLabel>Topic</SmallLabel>
                        <TopicInput>BMS_Watchdog</TopicInput>
                        <RawOption>
                            raw
                            <RadioDot />
                        </RawOption>
                    </DetailSection>
                    <FabRow>
                        <Fab>
                            <AlignLeft size={10} strokeWidth={2.6} />
                        </Fab>
                    </FabRow>
                    <EditorBlock>
                        <EditorGutter />
                        <EditorLine />
                    </EditorBlock>
                </DetailPane>
            </Panes>
        </MqttWindow>
    </Page>
);

export default App;
